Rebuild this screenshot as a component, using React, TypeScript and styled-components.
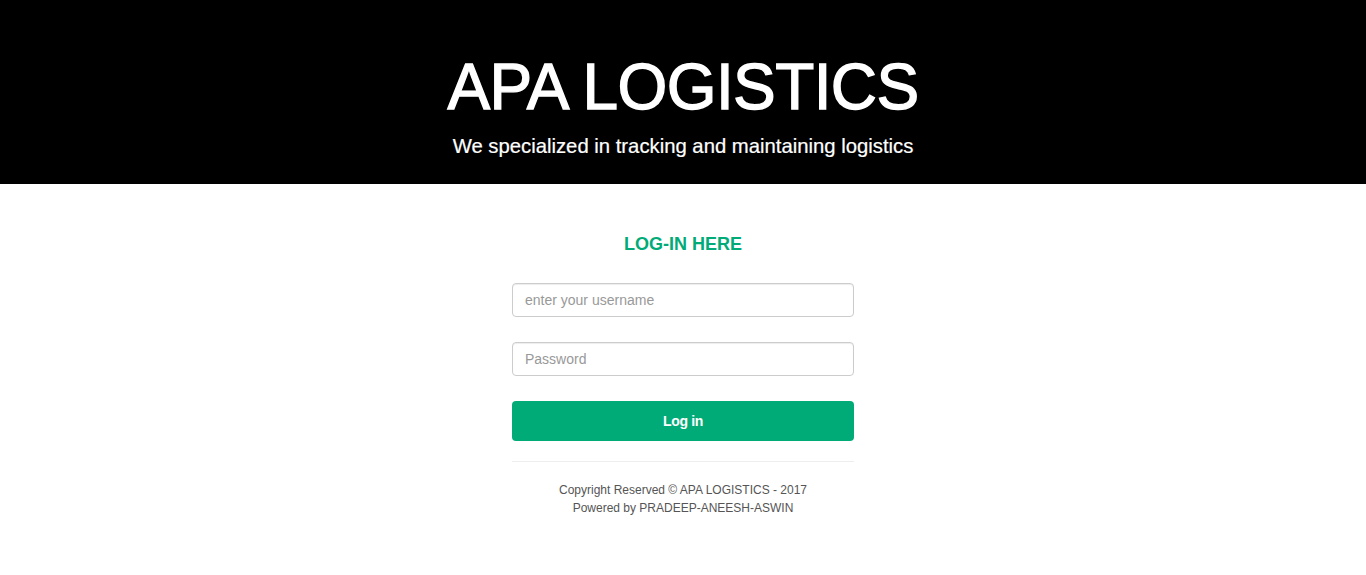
import React from "react";
import styled, { createGlobalStyle } from "styled-components";

const GlobalStyle = createGlobalStyle`
  html, body { margin: 0; padding: 0; background: #fff; }
  body { font-family: "Liberation Sans", Arial, Helvetica, sans-serif; color: #333; }
  * { box-sizing: border-box; }
`;

const Header = styled.header`
  background: #000;
  color: #fff;
  height: 184px;
  display: flex;
  flex-direction: column;
  align-items: center;
  padding-top: 52px;
`;

const Title = styled.h1`
  margin: 0;
  font-size: 64px;
  line-height: 70px;
  font-weight: 400;
  letter-spacing: -0.6px;
  -webkit-text-stroke: 1.3px #fff;
`;

const Subtitle = styled.p`
  margin: 12px 0 0;
  font-size: 20.3px;
  line-height: 24px;
  -webkit-text-stroke: 0.2px #fff;
`;

const Main = styled.main`
  width: 342px;
  margin: 0 auto;
  padding-top: 50px;
  display: flex;
  flex-direction: column;
`;

const Heading = styled.h3`
  margin: 0 0 29px;
  text-align: center;
  color: #00ab78;
  font-size: 18px;
  line-height: 20px;
  font-weight: 700;
`;

const Input = styled.input<{ $gap: number }>`
  width: 100%;
  height: 34px;
  padding: 6px 12px;
  font-family: inherit;
  font-size: 14px;
  color: #555;
  border: 1px solid #ccc;
  border-radius: 4px;
  margin-bottom: ${(p) => p.$gap}px;
  box-shadow: inset 0 1px 1px rgba(0, 0, 0, 0.075);
  outline: none;
  &::placeholder { color: #999; }
`;

const Button = styled.button`
  width: 100%;
  height: 40px;
  border: none;
  border-radius: 4px;
  background: #00ab78;
  color: #fff;
  font-family: inherit;
  font-size: 14px;
  font-weight: 700;
  letter-spacing: -0.3px;
  cursor: pointer;
`;

const Rule = styled.hr`
  margin: 20px 0 0;
  border: 0;
  border-top: 1px solid #eee;
`;

const Footer = styled.footer`
  margin-top: 19px;
  text-align: center;
  font-size: 12px;
  line-height: 18px;
  color: #555;
`;

export default function App() {
  return (
    <>
      <GlobalStyle />
      <Header>
        <Title>APA LOGISTICS</Title>
        <Subtitle>We specialized in tracking and maintaining logistics</Subtitle>
      </Header>
      <Main>
        <Heading>LOG-IN HERE</Heading>
        <Input $gap={25} type="text" placeholder="enter your username" />
        <Input $gap={25} type="password" placeholder="Password" />
        <Button>Log in</Button>
        <Rule />
        <Footer>
          <div>Copyright Reserved © APA LOGISTICS - 2017</div>
          <div>Powered by PRADEEP-ANEESH-ASWIN</div>
        </Footer>
      </Main>
    </>
  );
}
